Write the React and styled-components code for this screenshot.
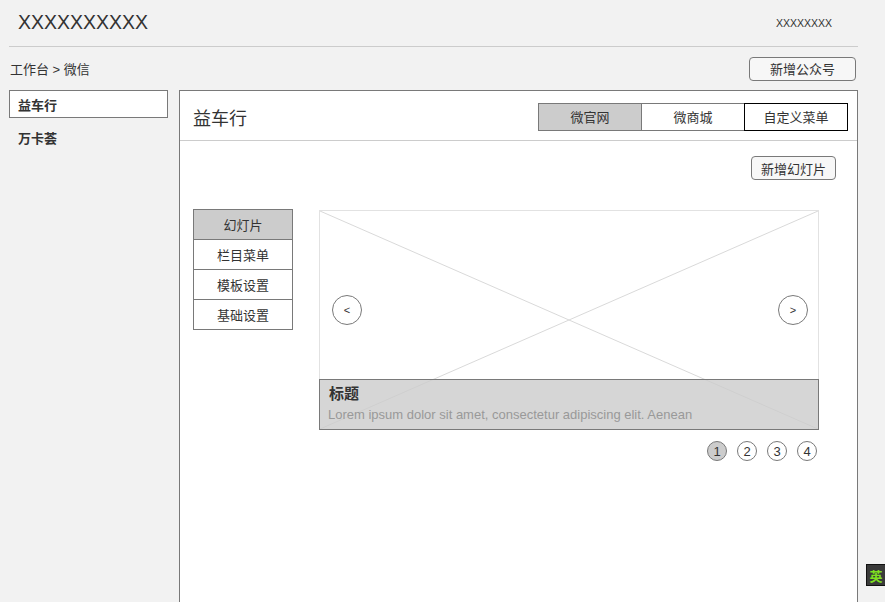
import React from "react";
import styled, { createGlobalStyle } from "styled-components";

const Global = createGlobalStyle`
  html, body { margin: 0; padding: 0; background: #f2f2f2; overflow: hidden; }
  body { font-family: "Liberation Sans", "Noto Sans CJK SC", sans-serif; color: #333; }
  * { box-sizing: border-box; }
`;

const Page = styled.div`
  width: 849px;
  margin-left: 9px;
`;

const Header = styled.header`
  height: 47px;
  border-bottom: 1px solid #cccccc;
  display: flex;
  align-items: center;
  justify-content: space-between;
  padding: 0 26px 0 9px;
`;

const Logo = styled.div`
  font-size: 19.5px;
  color: #333;
  margin-top: -2px;
`;

const UserName = styled.div`
  font-size: 10.5px;
  color: #333;
  margin-top: -1px;
`;

const SubBar = styled.div`
  height: 43px;
  display: flex;
  align-items: center;
  justify-content: space-between;
  padding-right: 2px;
`;

const Crumb = styled.div`
  font-size: 13px;
  color: #333;
  padding-left: 1px;
`;

const Button = styled.button`
  font-family: "Liberation Sans", "Noto Sans CJK SC", sans-serif;
  font-size: 13px;
  color: #333;
  background: #f7f7f7;
  border: 1px solid #797979;
  border-radius: 4px;
  height: 24px;
  width: ${(p) => p.$w}px;
  padding: 0;
  cursor: pointer;
`;

const Body = styled.div`
  display: flex;
  gap: 11px;
  align-items: flex-start;
`;

const Sidebar = styled.nav`
  width: 159px;
  display: flex;
  flex-direction: column;
`;

const SideItem = styled.div`
  height: ${(p) => (p.$active ? 28 : 37)}px;
  display: flex;
  align-items: center;
  padding-left: 8px;
  font-size: 13px;
  font-weight: bold;
  color: #333;
  background: ${(p) => (p.$active ? "#fff" : "transparent")};
  border: 1px solid ${(p) => (p.$active ? "#797979" : "transparent")};
  padding-top: ${(p) => (p.$active ? 0 : 2)}px;
`;

const Panel = styled.main`
  width: 679px;
  height: 530px;
  background: #fff;
  border: 1px solid #797979;
  border-bottom: none;
`;

const PanelHead = styled.div`
  height: 50px;
  border-bottom: 1px solid #cccccc;
  display: flex;
  align-items: center;
  justify-content: space-between;
  padding: 0 9px 0 13px;
`;

const PanelTitle = styled.div`
  font-size: 18px;
  color: #333;
  margin-top: 2px;
`;

const Tabs = styled.div`
  display: flex;
  margin-top: 2px;
`;

const Tab = styled.div`
  width: 104px;
  height: 28px;
  display: flex;
  align-items: center;
  justify-content: center;
  font-size: 13px;
  color: #333;
  background: ${(p) => (p.$active ? "#cccccc" : "#fff")};
  border: 1px solid ${(p) => (p.$strong ? "#000" : "#797979")};
  margin-left: ${(p) => (p.$first ? 0 : -1)}px;
  position: relative;
  z-index: ${(p) => (p.$strong ? 1 : 0)};
`;

const PanelBody = styled.div`
  padding: 15px 21px 0 13px;
  display: flex;
  flex-direction: column;
`;

const ActionRow = styled.div`
  display: flex;
  justify-content: flex-end;
`;

const Content = styled.div`
  display: flex;
  gap: 26px;
  margin-top: 29px;
  align-items: flex-start;
`;

const Menu = styled.div`
  width: 100px;
  border: 1px solid #797979;
  display: flex;
  flex-direction: column;
`;

const MenuItem = styled.div`
  height: ${(p) => (p.$first ? 29 : 30)}px;
  display: flex;
  align-items: center;
  justify-content: center;
  font-size: 13px;
  color: #333;
  background: ${(p) => (p.$active ? "#cccccc" : "#fff")};
  border-top: ${(p) => (p.$first ? "none" : "1px solid #797979")};
`;

const SliderCol = styled.div`
  width: 500px;
  margin-top: 1px;
  display: flex;
  flex-direction: column;
`;

const Slide = styled.div`
  position: relative;
  height: 220px;
  border: 1px solid #e2e2e2;
  display: flex;
  flex-direction: column;
  justify-content: flex-end;
`;

const Cross = styled.svg`
  position: absolute;
  inset: 0;
  width: 100%;
  height: 100%;
`;

const NavBtn = styled.div`
  position: absolute;
  top: 84px;
  ${(p) => (p.$right ? "right: 10px;" : "left: 12px;")}
  width: 30px;
  height: 30px;
  border: 1px solid #797979;
  border-radius: 50%;
  background: #fff;
  display: flex;
  align-items: center;
  justify-content: center;
  font-size: 11px;
  color: #333;
  z-index: 2;
`;

const Caption = styled.div`
  position: relative;
  z-index: 1;
  height: 51px;
  margin: 0 -1px -1px -1px;
  background: rgba(204, 204, 204, 0.8);
  border: 1px solid #797979;
  padding: 3px 9px 0 8px;
`;

const CaptionTitle = styled.div`
  font-size: 15px;
  font-weight: bold;
  color: #333;
  line-height: 22px;
  padding-left: 1px;
`;

const CaptionText = styled.div`
  font-size: 13px;
  color: #999;
  line-height: 18px;
  margin-top: 1px;
`;

const Pager = styled.div`
  display: flex;
  justify-content: flex-end;
  gap: 10px;
  margin-top: 11px;
  padding-right: 2px;
`;

const Dot = styled.div`
  width: 20px;
  height: 20px;
  border-radius: 50%;
  border: 1px solid #797979;
  background: ${(p) => (p.$active ? "#cccccc" : "#fff")};
  display: flex;
  align-items: center;
  justify-content: center;
  font-size: 13px;
  color: #333;
`;

const Ime = styled.div`
  position: fixed;
  left: 866px;
  top: 564px;
  width: 20px;
  height: 22px;
  background: #3a3a3a;
  border: 1px solid #111;
  color: #7fe020;
  font-size: 13px;
  font-weight: bold;
  display: flex;
  align-items: center;
  justify-content: center;
  font-family: "Noto Sans CJK SC", sans-serif;
`;

export default function App() {
  return (
    <>
      <Global />
      <Page>
        <Header>
          <Logo>XXXXXXXXXX</Logo>
          <UserName>XXXXXXXX</UserName>
        </Header>
        <SubBar>
          <Crumb>工作台 &gt; 微信</Crumb>
          <Button $w={107}>新增公众号</Button>
        </SubBar>
        <Body>
          <Sidebar>
            <SideItem $active>益车行</SideItem>
            <SideItem>万卡荟</SideItem>
          </Sidebar>
          <Panel>
            <PanelHead>
              <PanelTitle>益车行</PanelTitle>
              <Tabs>
                <Tab $first $active>微官网</Tab>
                <Tab>微商城</Tab>
                <Tab $strong>自定义菜单</Tab>
              </Tabs>
            </PanelHead>
            <PanelBody>
              <ActionRow>
                <Button $w={85}>新增幻灯片</Button>
              </ActionRow>
              <Content>
                <Menu>
                  <MenuItem $first $active>幻灯片</MenuItem>
                  <MenuItem>栏目菜单</MenuItem>
                  <MenuItem>模板设置</MenuItem>
                  <MenuItem>基础设置</MenuItem>
                </Menu>
                <SliderCol>
                  <Slide>
                    <Cross viewBox="0 0 500 220" preserveAspectRatio="none">
                      <line x1="0" y1="0" x2="500" y2="220" stroke="#d9d9d9" strokeWidth="1" />
                      <line x1="500" y1="0" x2="0" y2="220" stroke="#d9d9d9" strokeWidth="1" />
                    </Cross>
                    <NavBtn>&lt;</NavBtn>
                    <NavBtn $right>&gt;</NavBtn>
                    <Caption>
                      <CaptionTitle>标题</CaptionTitle>
                      <CaptionText>Lorem ipsum dolor sit amet, consectetur adipiscing elit. Aenean</CaptionText>
                    </Caption>
                  </Slide>
                  <Pager>
                    <Dot $active>1</Dot>
                    <Dot>2</Dot>
                    <Dot>3</Dot>
                    <Dot>4</Dot>
                  </Pager>
                </SliderCol>
              </Content>
            </PanelBody>
          </Panel>
        </Body>
      </Page>
      <Ime>英</Ime>
    </>
  );
}
